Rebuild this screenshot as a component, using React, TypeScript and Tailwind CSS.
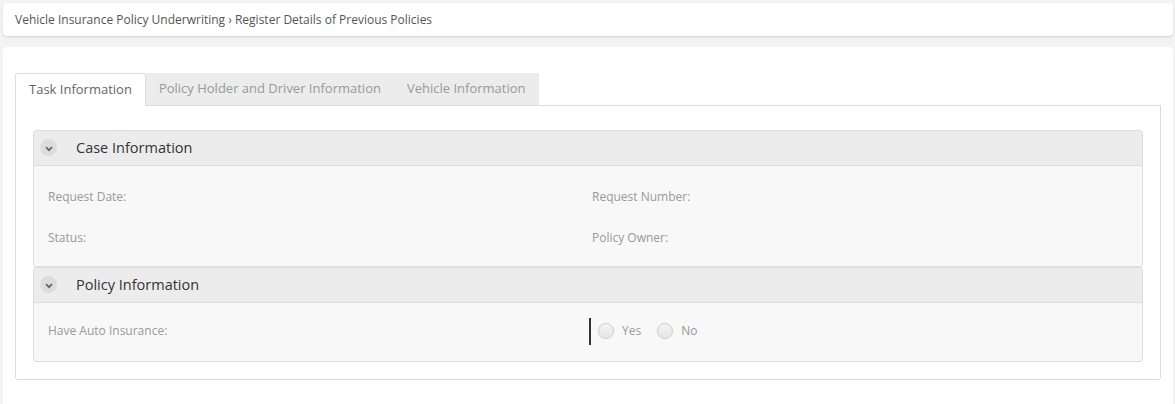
import React from "react";

const font = { fontFamily: '"Open Sans", "Liberation Sans", sans-serif' };

function Chevron() {
  return (
    <span className="flex h-[17px] w-[17px] items-center justify-center rounded-full bg-[#dcdcdc]">
      <svg width="8" height="6" viewBox="0 0 8 6" className="mt-[2px]">
        <path d="M1 1.2 L4 4.2 L7 1.2" fill="none" stroke="#666" strokeWidth="1.7" />
      </svg>
    </span>
  );
}

function Panel({ title, children }: { title: string; children: React.ReactNode }) {
  return (
    <div className="rounded-[3px] border border-[#dedede] bg-[#f8f8f8]">
      <div className="flex h-[35px] items-center border-b border-[#dedede] bg-[#ececec] pb-[1px] pl-[6px]">
        <Chevron />
        <span className="ml-[19px] text-[14.5px] text-[#333]">{title}</span>
      </div>
      {children}
    </div>
  );
}

function Radio({ label }: { label: string }) {
  return (
    <label className="flex items-center">
      <span className="h-[16px] w-[16px] rounded-full border border-[#d0d0d0] bg-gradient-to-b from-[#f4f4f4] to-[#e6e6e6] shadow-[0_0_2px_rgba(0,0,0,0.08)]" />
      <span className="ml-[8px] text-[12px] text-[#999]">{label}</span>
    </label>
  );
}

export default function App() {
  const tabs = ["Task Information", "Policy Holder and Driver Information", "Vehicle Information"];
  return (
    <div className="min-h-[404px] bg-[#f3f3f3] pl-[3px] pr-[2px] pt-[3px]" style={font}>
      <div className="flex h-[33px] items-center rounded-[4px] bg-white pl-[12px] text-[12px] text-[#555] shadow-[0_1px_2px_rgba(0,0,0,0.15)]">
        Vehicle Insurance Policy Underwriting › Register Details of Previous Policies
      </div>
      <div className="mt-[11px] h-[360px] rounded-t-[4px] bg-white px-[12px] pt-[26px]">
        <div className="flex h-[32px] text-[13px]">
          {tabs.map((t, i) =>
            i === 0 ? (
              <div key={t} className="relative z-10 -mb-px flex items-center rounded-t-[3px] border border-b-0 border-[#dcdcdc] bg-white px-[13px] text-[#666]">
                {t}
              </div>
            ) : (
              <div key={t} className="flex items-center bg-[#ececec] px-[13px] text-[#999]">
                {t}
              </div>
            )
          )}
        </div>
        <div className="h-[275px] rounded-b-[3px] border border-[#dcdcdc] px-[17px] pt-[24px]">
          <Panel title="Case Information">
            <div className="grid grid-cols-[544px_1fr] pl-[14px] pt-[20px] pb-[18px] text-[12px] text-[#999]">
              <div className="flex h-[21px] items-center">Request Date:</div>
              <div className="flex h-[21px] items-center">Request Number:</div>
              <div className="mt-[20px] flex h-[21px] items-center">Status:</div>
              <div className="mt-[20px] flex h-[21px] items-center">Policy Owner:</div>
            </div>
          </Panel>
          <Panel title="Policy Information">
            <div className="grid h-[58px] grid-cols-[541px_1fr] items-center pl-[14px] pb-[2px] text-[12px] text-[#999]">
              <div>Have Auto Insurance:</div>
              <div className="flex items-center">
                <span className="h-[27px] w-[2px] bg-[#333]" />
                <div className="ml-[7px] flex items-center gap-[16px]">
                  <Radio label="Yes" />
                  <Radio label="No" />
                </div>
              </div>
            </div>
          </Panel>
        </div>
      </div>
    </div>
  );
}
